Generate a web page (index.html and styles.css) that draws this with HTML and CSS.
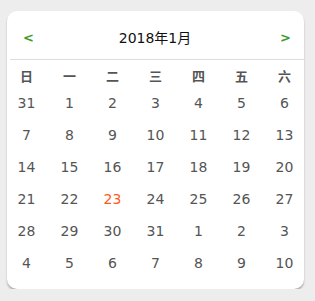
FILE: index.html
```html
<!DOCTYPE html>
<html>
<head>
    <meta charset="utf-8">
    <title>日历</title>
    <link rel="stylesheet" href="styles.css">
</head>
<body>
<div class="calendar">
    <div class="cal-head">
        <span class="cal-arrow">&lt;</span>
        <span class="cal-title">2018年1月</span>
        <span class="cal-arrow">&gt;</span>
    </div>
    <div class="cal-week">
        <span>日</span><span>一</span><span>二</span><span>三</span><span>四</span><span>五</span><span>六</span>
    </div>
    <div class="cal-days">
        <span>31</span><span>1</span><span>2</span><span>3</span><span>4</span><span>5</span><span>6</span>
        <span>7</span><span>8</span><span>9</span><span>10</span><span>11</span><span>12</span><span>13</span>
        <span>14</span><span>15</span><span>16</span><span>17</span><span>18</span><span>19</span><span>20</span>
        <span>21</span><span>22</span><span class="today">23</span><span>24</span><span>25</span><span>26</span><span>27</span>
        <span>28</span><span>29</span><span>30</span><span>31</span><span>1</span><span>2</span><span>3</span>
        <span>4</span><span>5</span><span>6</span><span>7</span><span>8</span><span>9</span><span>10</span>
    </div>
</div>
</body>
</html>
```

FILE: styles.css
```css
body {
    margin: 0;
    padding: 11px 11px 0 7px;
    background-color: #ededed;
    font-family: "DejaVu Sans", "Noto Sans CJK SC", sans-serif;
}

.calendar {
    width: 297px;
    padding-bottom: 10px;
    background-color: #fff;
    border-radius: 10px;
    box-shadow: 0 2px 2px rgba(0, 0, 0, 0.28);
}

.cal-head {
    display: flex;
    justify-content: space-between;
    align-items: center;
    height: 22px;
    padding: 16px 13px 10px 13px;
    margin-left: 3px;
    border-bottom: 1px solid #ddd;
}

.cal-arrow {
    color: #3d9a2a;
    font-size: 13px;
    font-weight: bold;
    line-height: 22px;
}

.cal-title {
    color: #111;
    font-size: 14px;
    line-height: 22px;
    font-family: "DejaVu Sans", "Noto Sans CJK SC", sans-serif;
    margin-left: -4px;
}

.cal-week,
.cal-days {
    display: grid;
    grid-template-columns: repeat(7, 43px);
    margin-left: -2px;
    text-align: center;
}

.cal-week {
    padding-top: 4px;
    height: 23px;
    line-height: 23px;
    font-family: "Noto Sans CJK SC", sans-serif;
    font-size: 13px;
    font-weight: bold;
    color: #555;
}

.cal-days span {
    height: 32px;
    line-height: 32px;
    font-size: 14px;
    color: #555;
}

.cal-days .today {
    color: #ff5722;
}
```
